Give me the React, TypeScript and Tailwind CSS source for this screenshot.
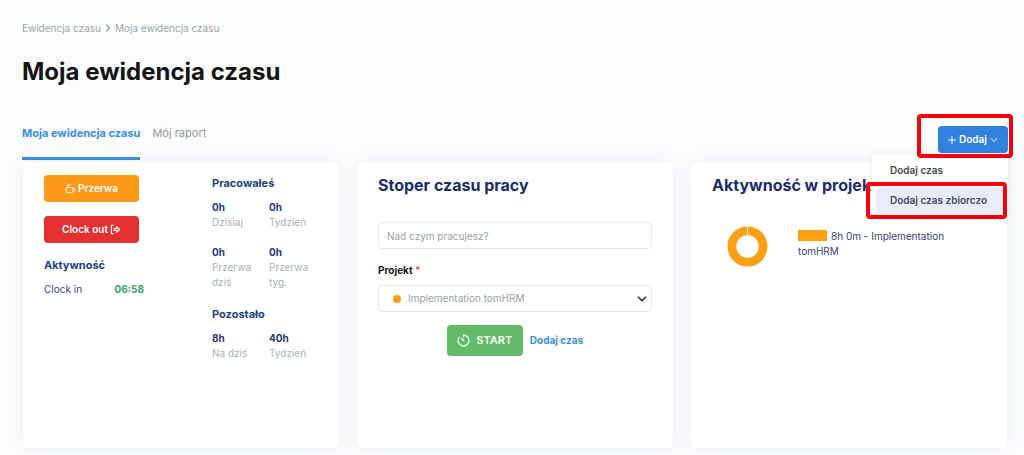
import React, { useState } from 'react'
import { ChevronDown, ChevronRight, Plus } from 'lucide-react'

type Stat = { value: string; label: string }

const worked: Stat[] = [
  { value: '0h', label: 'Dzisiaj' },
  { value: '0h', label: 'Tydzień' },
  { value: '0h', label: 'Przerwa dziś' },
  { value: '0h', label: 'Przerwa tyg.' },
]

const remaining: Stat[] = [
  { value: '8h', label: 'Na dziś' },
  { value: '40h', label: 'Tydzień' },
]

const cardStyle = 'min-h-[288px] rounded-md border border-[#f3f5f8] bg-white px-[21px] pt-[13px] pb-5 shadow-[0_0_20px_rgba(40,80,110,0.06)]'
const cardTitleStyle = 'text-base leading-5 font-bold text-[#1b2d69] whitespace-nowrap'
const sectionTitleStyle = 'text-[11px] leading-4 font-bold text-[#1c437f]'
const actionStyle = 'flex h-[27px] w-[95px] items-center justify-center gap-0.5 rounded text-[10px] font-semibold text-white'
const fieldStyle = 'block h-[27px] w-full rounded border border-[#e3e9ee] bg-white text-[10px]'

function CupIcon() {
  return (
    <svg viewBox="0 0 24 24" className="size-[11px]" fill="none" stroke="currentColor" strokeWidth="2" aria-hidden="true">
      <path d="M2 10h15v8a3 3 0 0 1-3 3H5a3 3 0 0 1-3-3z" />
      <path d="M17 12h3a2 2 0 0 1 2 2v1a3 3 0 0 1-3 3h-2" />
      <path d="M5 7V5h6V2" />
    </svg>
  )
}

function ExitIcon() {
  return (
    <svg viewBox="0 0 24 24" className="size-[11px]" fill="none" stroke="currentColor" strokeWidth="2.500" strokeLinejoin="round" aria-hidden="true">
      <path d="M8 3H3v18h5" />
      <path d="M9 10h5V6l7 6-7 6v-4H9z" />
    </svg>
  )
}

function StopwatchIcon() {
  return (
    <svg viewBox="0 0 24 24" className="size-[13px]" fill="none" stroke="currentColor" strokeWidth="2.200" strokeLinecap="round" aria-hidden="true">
      <path d="M12 2a10 10 0 1 1-8 4" />
      <path d="M12 2v4" />
      <path d="M8 8l4 4" />
    </svg>
  )
}

function StatGrid({ items }: { items: Stat[] }) {
  return (
    <dl className="mt-[9px] grid grid-cols-[57px_57px] gap-y-[15px] text-[10px] leading-[15px]">
      {items.map((item, i) => (
        <div key={i} className="flex flex-col-reverse justify-end">
          <dt className="w-12 text-[#a9b0b9]">{item.label}</dt>
          <dd className="font-bold text-[#26387a]">{item.value}</dd>
        </div>
      ))}
    </dl>
  )
}

// Czas pracy, przerwy i pozostałe godziny
function TimeCard() {
  return (
    <section className={`${cardStyle} flex gap-[68px]`}>
      <div className="w-[100px] shrink-0">
        <button type="button" className={`${actionStyle} bg-[#fd9a18]`}>
          <CupIcon />
          Przerwa
        </button>
        <button type="button" className={`${actionStyle} mt-3.5 bg-[#e53030]`}>
          Clock out
          <ExitIcon />
        </button>
        <h3 className={`${sectionTitleStyle} mt-3.5`}>Aktywność</h3>
        <div className="mt-2 flex justify-between text-[10px] leading-4">
          <span className="text-[#3a4680]">Clock in</span>
          <span className="font-bold text-[#38a169]">06:58</span>
        </div>
      </div>
      <div>
        <h3 className={sectionTitleStyle}>Pracowałeś</h3>
        <StatGrid items={worked} />
        <h3 className={`${sectionTitleStyle} mt-4`}>Pozostało</h3>
        <StatGrid items={remaining} />
      </div>
    </section>
  )
}

// Stoper z wyborem projektu
function StopwatchCard() {
  const [task, setTask] = useState('')

  return (
    <section className={cardStyle}>
      <h2 className={cardTitleStyle}>Stoper czasu pracy</h2>
      <form className="mt-[27px]" onSubmit={e => e.preventDefault()}>
        <input
          type="text"
          aria-label="Nad czym pracujesz?"
          placeholder="Nad czym pracujesz?"
          value={task}
          onChange={e => setTask(e.target.value)}
          className={`${fieldStyle} px-2 text-gray-700 placeholder:text-[#9a9fa5]`}
        />
        <label htmlFor="project" className="mt-[13px] block text-[10px] leading-4 font-bold text-[#1a1a1a]">
          Projekt <span className="text-[#e5533d]">*</span>
        </label>
        <div className="relative mt-[7px]">
          <select id="project" className={`${fieldStyle} appearance-none pr-7 pl-[29px] text-[#9a9fa5]`}>
            <option>Implementation tomHRM</option>
          </select>
          <span className="pointer-events-none absolute top-[10px] left-[15px] size-2 rounded-full bg-[#f6a01a]" />
          <ChevronDown className="pointer-events-none absolute top-[7px] right-[3px] size-3.5 text-[#333]" strokeWidth={3} />
        </div>
        <div className="mt-[13px] flex items-center justify-center gap-[7px]">
          <button type="submit" className="flex h-[31px] w-[76px] items-center justify-center gap-1.5 rounded bg-[#63bb67] text-[11px] font-semibold text-white">
            <StopwatchIcon />
            START
          </button>
          <a href="#dodaj-czas" className="text-[10px] font-bold text-[#3f8fe0]">Dodaj czas</a>
        </div>
      </form>
    </section>
  )
}

function ProjectsCard() {
  return (
    <section className={cardStyle}>
      <h2 className={cardTitleStyle}>Aktywność w projektach</h2>
      <div className="mt-[31px] flex gap-[30px] pl-[15px]">
        <svg viewBox="0 0 42 42" className="size-[41px] shrink-0" aria-hidden="true">
          <circle cx="21" cy="21" r="16" fill="none" stroke="#ffa014" strokeWidth="9" />
          <path d="M21 0v11" stroke="#fff" strokeWidth="1" />
        </svg>
        <p className="mt-[3px] w-40 text-[10px] leading-[15px] text-[#33427a]">
          <span className="mr-1 inline-block h-[11px] w-[29px] bg-[#ffa014] align-[-1px]" />
          8h 0m - Implementation tomHRM
        </p>
      </div>
    </section>
  )
}

// Przycisk "Dodaj" z rozwiniętym menu
function AddMenu() {
  const [open, setOpen] = useState(true)

  return (
    <div className="relative mt-1.5">
      <button
        type="button"
        aria-expanded={open}
        onClick={() => setOpen(!open)}
        className="flex h-[27px] w-[70px] items-center justify-center gap-px rounded bg-[#3182df] text-[10px] font-semibold text-white"
      >
        <Plus className="size-3" strokeWidth={2} />
        Dodaj
        <ChevronDown className="size-3" strokeWidth={2} />
      </button>
      {open && (
        <div className="absolute top-7 right-0 z-10 w-[136px] rounded bg-white px-1 pt-[3px] pb-1 text-[10px] font-semibold text-[#454b54] shadow-[0_1px_6px_rgba(40,60,90,0.1)]">
          <button type="button" className="block h-[26px] w-full px-3.5 text-left">Dodaj czas</button>
          <div className="relative mt-1">
            <button type="button" className="block h-[27px] w-full rounded bg-[#e9edfb] px-3.5 text-left whitespace-nowrap">Dodaj czas zbiorczo</button>
            <span className="pointer-events-none absolute -top-[5px] right-[-3px] -bottom-[5px] -left-2.5 rounded-sm border-4 border-[#f50008]" />
          </div>
        </div>
      )}
      <span className="pointer-events-none absolute -top-3 -right-[5px] -bottom-[5px] -left-[21px] z-20 rounded-sm border-4 border-[#f50008]" />
    </div>
  )
}

export default function App() {
  return (
    <main className="min-h-screen bg-[#fbfcfe] pt-5 pr-4 pb-[7px] pl-[22px] font-['Inter','Liberation_Sans',sans-serif]">
      <nav aria-label="Ścieżka" className="flex items-center gap-px text-[10px] leading-4 text-[#a0a4a9]">
        <a href="#ewidencja">Ewidencja czasu</a>
        <ChevronRight className="size-3" strokeWidth={3} />
        <a href="#moja-ewidencja">Moja ewidencja czasu</a>
      </nav>
      <h1 className="mt-5 text-2xl leading-8 font-bold text-[#141414]">Moja ewidencja czasu</h1>

      <div className="mt-8 flex items-start justify-between">
        <nav aria-label="Widok" className="flex gap-3 text-[11px] leading-4">
          <a href="#moja-ewidencja" aria-current="page" className="h-10 border-b-3 border-[#3a8ee0] pt-[5px] font-bold text-[#3a8ee0]">Moja ewidencja czasu</a>
          <a href="#raport" className="pt-[5px] text-[#94989d]">Mój raport</a>
        </nav>
        <AddMenu />
      </div>

      <div className="mt-px grid grid-cols-3 gap-4">
        <TimeCard />
        <StopwatchCard />
        <ProjectsCard />
      </div>
    </main>
  )
}
